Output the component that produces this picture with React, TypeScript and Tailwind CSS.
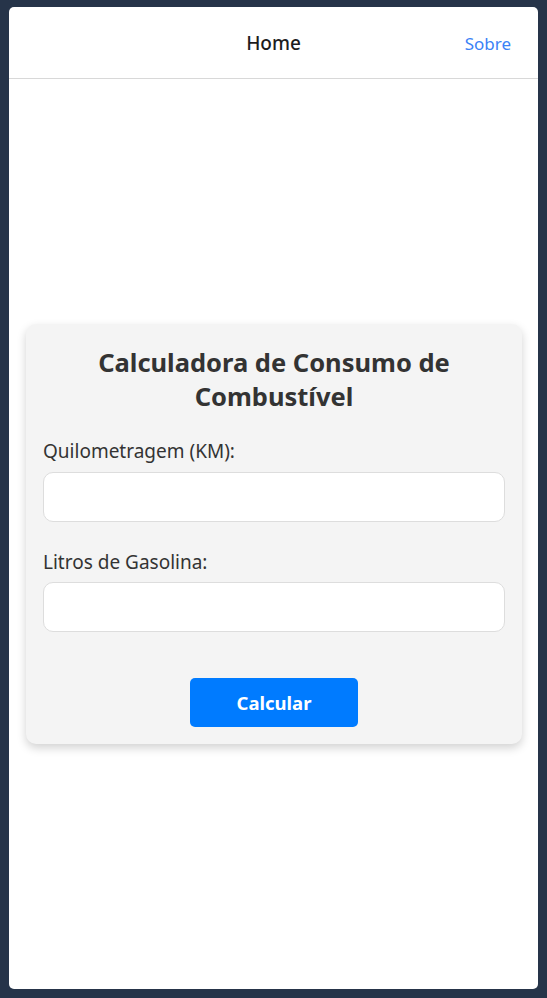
export default function App() {
  return (
    <div className="h-[998px] w-[547px] bg-[#263449] pt-[7px] pl-[9px] pr-[9px] pb-[9px]" style={{ fontFamily: '"Noto Sans", "Open Sans", sans-serif' }}>
      <div className="flex h-full flex-col rounded-[5px] bg-white overflow-hidden">
        <header className="relative flex h-[72px] shrink-0 items-center justify-center border-b border-[#d8d8d8]">
          <h1 className="mt-[2px] text-[19px] font-medium text-[#1c1c1e]">Home</h1>
          <a className="absolute right-[27px] mt-[2px] text-[17px] text-[#3b82f6]" href="#">Sobre</a>
        </header>
        <main className="flex flex-1 items-center justify-center pl-[17px] pr-[16px]">
          <div className="w-full rounded-[10px] bg-[#f4f4f4] px-[17px] pt-[21px] pb-[17px] shadow-[0_4px_10px_rgba(0,0,0,0.18)]">
            <h2 className="mb-[26px] text-center text-[25.5px] font-bold leading-[34px] text-[#333333]">
              Calculadora de Consumo de Combustível
            </h2>
            <label className="block text-[19px] leading-[24px] text-[#333333]">Quilometragem (KM):</label>
            <input className="mt-[9px] block h-[50px] w-full rounded-[10px] border border-[#dddddd] bg-white px-3" />
            <label className="mt-[28px] block text-[19px] leading-[24px] text-[#333333]">Litros de Gasolina:</label>
            <input className="mt-[8px] block h-[50px] w-full rounded-[10px] border border-[#dddddd] bg-white px-3" />
            <div className="mt-[46px] flex justify-center">
              <button className="h-[49px] w-[168px] rounded-[5px] bg-[#007bff] text-[18.5px] font-bold text-white">Calcular</button>
            </div>
          </div>
        </main>
      </div>
    </div>
  );
}
